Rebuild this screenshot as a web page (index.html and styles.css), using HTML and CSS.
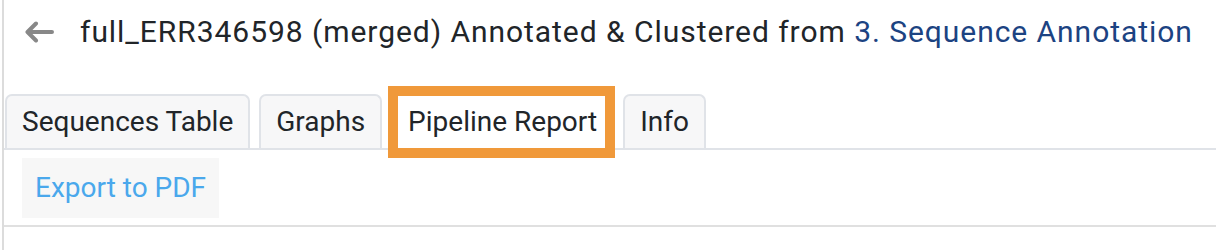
FILE: index.html
```html
<!DOCTYPE html>
<html>
<head>
<meta charset="utf-8">
<link rel="stylesheet" href="styles.css">
</head>
<body>
<div class="page">
  <div class="header">
    <svg class="back" width="30" height="22" viewBox="0 0 30 22"><path d="M28 11H4 M12 2.5L3.5 11L12 19.5" fill="none" stroke="#888" stroke-width="4" stroke-linecap="round" stroke-linejoin="round"/></svg>
    <h1 class="title">full_ERR346598 (merged) Annotated &amp; Clustered from <a class="link">3. Sequence Annotation</a></h1>
  </div>
  <div class="tabs">
    <div class="tab">Sequences Table</div>
    <div class="tab">Graphs</div>
    <div class="tab active">Pipeline Report</div>
    <div class="tab">Info</div>
  </div>
  <div class="toolbar">
    <div class="btn">Export to PDF</div>
  </div>
</div>
</body>
</html>
```
FILE: styles.css
```css
html, body { margin: 0; padding: 0; background: #fff; }
body { font-family: Roboto, "Noto Sans", sans-serif; color: #212529; }
.page {
  margin-left: 2px;
  border-left: 2px solid #dcdcdc;
  height: 250px;
  box-sizing: border-box;
}
.header {
  display: flex;
  align-items: center;
  height: 63px;
  padding-left: 20px;
}
.back { flex: none; margin-right: 26px; margin-top: 1px; }
.title {
  margin: 0;
  font-size: 30px;
  letter-spacing: 0.95px;
  font-weight: 400;
  color: #212529;
  white-space: nowrap;
}
.link { color: #1c4382; }
.tabs {
  display: flex;
  gap: 9px;
  margin-top: 31px;
  padding-left: 1px;
  border-bottom: 2px solid #e0e3e8;
}
.tab {
  position: relative;
  height: 52px;
  line-height: 52px;
  padding: 0 15px;
  font-size: 28px;
  background: #f7f7f8;
  border: 2px solid #e0e3e8;
  border-bottom: none;
  border-radius: 7px 7px 0 0;
}
.tab.active { background: #fff; }
.tab.active::after {
  content: "";
  position: absolute;
  top: -10px; bottom: -10px; left: -5px; right: -3px;
  border: 10px solid #f0993a;
}
.toolbar {
  padding: 8px 18px 7px;
  border-bottom: 2px solid #e0e0e0;
}
.btn {
  display: inline-block;
  background: #f7f7f7;
  color: #4aa8ec;
  font-size: 28px;
  padding: 0 13px;
  height: 60px;
  line-height: 60px;
}
```
